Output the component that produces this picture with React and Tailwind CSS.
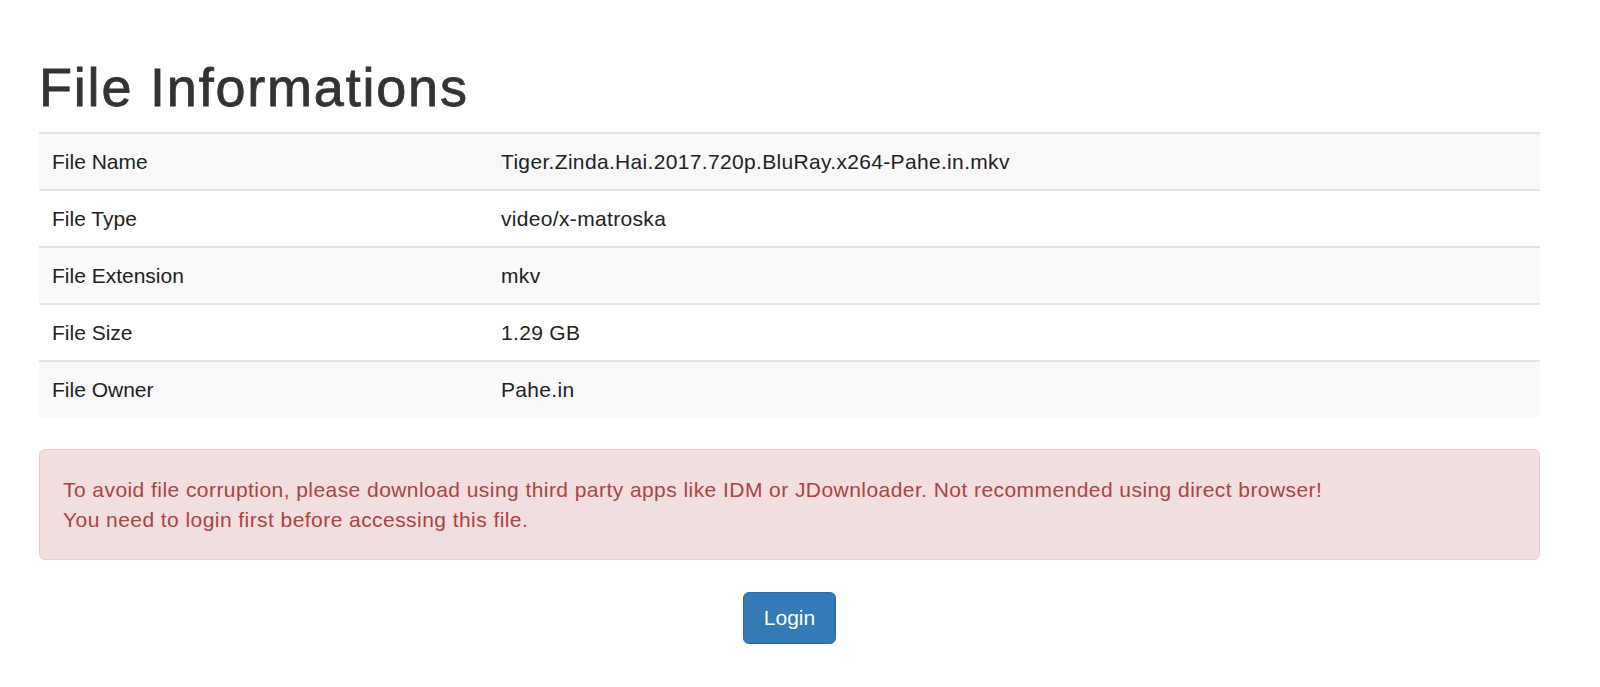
import React from 'react';

const rows = [
    { label: 'File Name', value: 'Tiger.Zinda.Hai.2017.720p.BluRay.x264-Pahe.in.mkv' },
    { label: 'File Type', value: 'video/x-matroska' },
    { label: 'File Extension', value: 'mkv' },
    { label: 'File Size', value: '1.29 GB' },
    { label: 'File Owner', value: 'Pahe.in' },
];

const App = () => {
    return (
        <div className="min-h-screen bg-white [font-family:'Liberation_Sans',Arial,sans-serif] text-[#333]">
            <div className="ml-[39px] w-[1501px] pt-[58px]">
                <h1 className="text-[54px] leading-[59.4px] tracking-[1.8px] [-webkit-text-stroke:0.8px_#333] mb-[15px]">
                    File Informations
                </h1>

                <table className="w-full border-collapse text-[21px] text-[#222] mb-[32px]">
                    <tbody>
                        {rows.map((row, index) => (
                            <tr key={row.label} className={index % 2 === 0 ? 'bg-[#f9f9f9]' : 'bg-white'}>
                                <td className="w-[450px] border-t-2 border-[#e3e3e3] px-[13px] py-[12px] leading-[31px]">
                                    {row.label}
                                </td>
                                <td className="border-t-2 border-[#e3e3e3] px-[12px] py-[12px] leading-[31px] tracking-[0.33px]">
                                    {row.value}
                                </td>
                            </tr>
                        ))}
                    </tbody>
                </table>

                <div className="rounded-[6px] border-[1.5px] border-[#ebccd1] bg-[#f2dede] px-[23px] py-[24.5px] text-[21px] leading-[30px] tracking-[0.44px] text-[#a94442]">
                    <div>To avoid file corruption, please download using third party apps like IDM or JDownloader. Not recommended using direct browser!</div>
                    <div>You need to login first before accessing this file.</div>
                </div>

                <div className="flex justify-center mt-[32px]">
                    <button className="rounded-[6px] border border-[#2e6da4] bg-[#337ab7] px-[19.5px] py-[10px] text-[21px] leading-[30px] text-white">
                        Login
                    </button>
                </div>
            </div>
        </div>
    );
};

export default App;
